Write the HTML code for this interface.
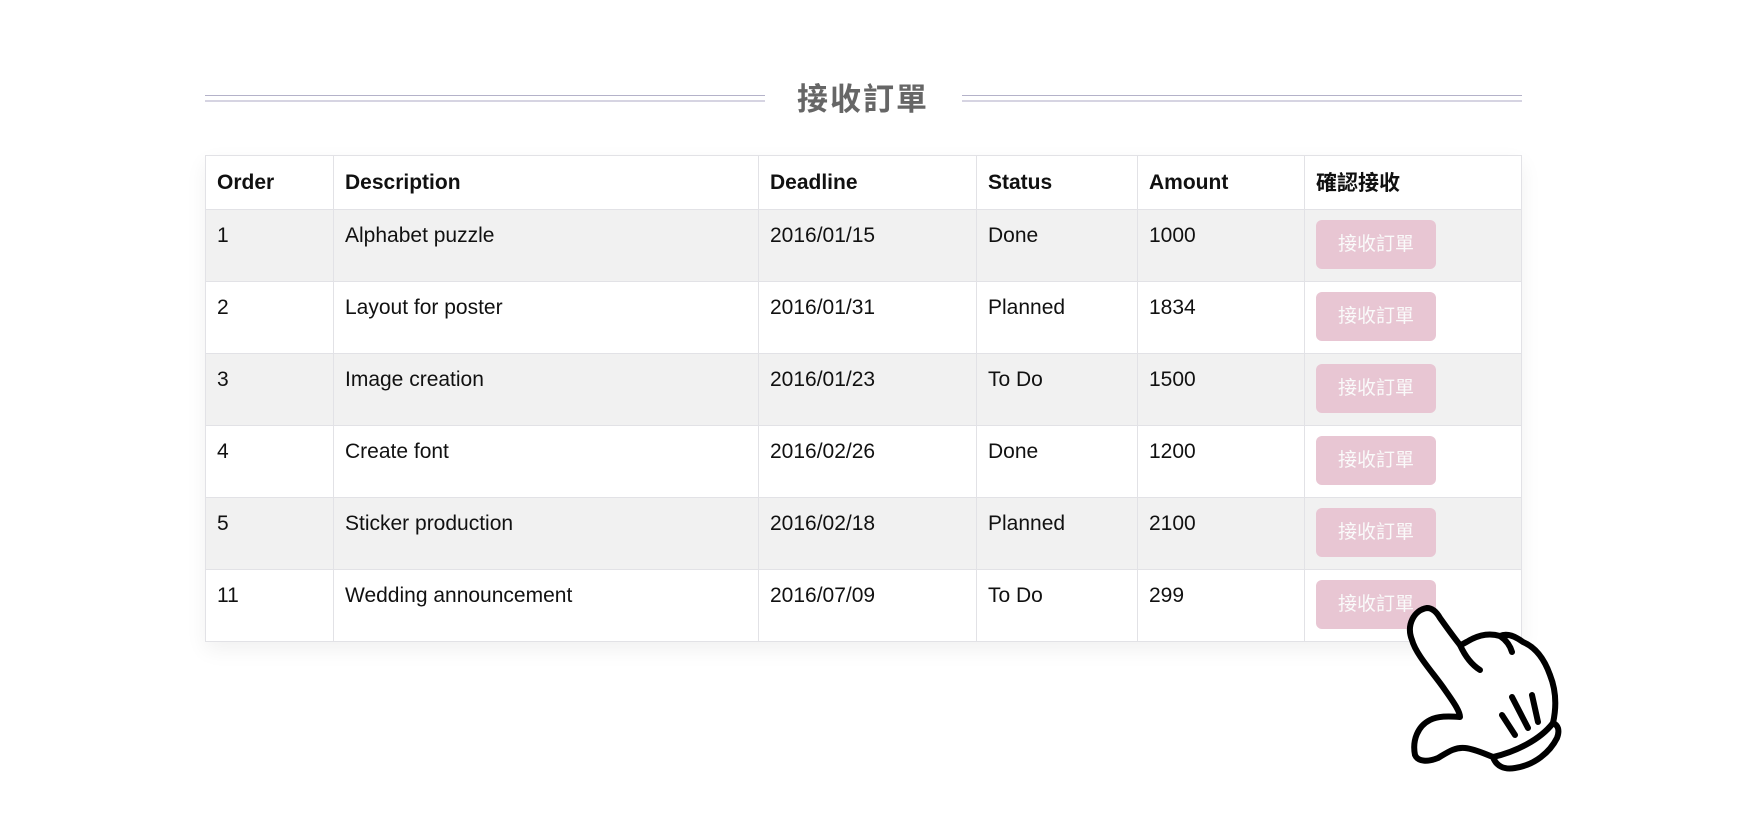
<!DOCTYPE html>
<html><head><meta charset="utf-8"><style>
body{margin:0;width:1748px;height:837px;background:#fff;position:relative;font-family:"Liberation Sans","Noto Sans CJK TC",sans-serif;overflow:hidden}
.l{position:absolute;height:6px;border-top:1px solid #b4b2c9;}
.l:after{content:"";position:absolute;left:0;right:0;top:4px;height:2px;background:#d6d4e2}
.title{position:absolute;left:763px;width:200px;top:74px;text-align:center;font-size:31px;font-weight:bold;color:#666;letter-spacing:2px}
table{position:absolute;left:205px;top:155px;width:1317px;border-collapse:collapse;box-shadow:0 8px 20px rgba(0,0,0,.06);font-size:21px;color:#111}
td,th{border:1px solid #e2e2e6;text-align:left;vertical-align:top;padding:14px 11px 0;box-sizing:border-box}
tr{height:72px}
tr:first-child{height:54px}
th{padding-top:15px;font-weight:bold}
tr:nth-child(even) td{background:#f1f1f1}
.b{display:inline-block;width:120px;height:49px;line-height:49px;background:#e8c6d3;color:#fafafa;border-radius:6px;text-align:center;font-size:19px;margin-top:-2px}
</style></head><body>
<div class="l" style="left:205px;width:560px;top:95px"></div>
<div class="l" style="left:962px;width:560px;top:95px"></div>
<div class="title">接收訂單</div>
<table>
<tr><th style="width:128px">Order</th><th style="width:425px">Description</th><th style="width:218px">Deadline</th><th style="width:161px">Status</th><th style="width:167px">Amount</th><th style="padding-top:11px">確認接收</th></tr>
<tr><td>1</td><td>Alphabet puzzle</td><td>2016/01/15</td><td>Done</td><td>1000</td><td style="padding-top:12px"><span class="b">接收訂單</span></td></tr>
<tr><td>2</td><td>Layout for poster</td><td>2016/01/31</td><td>Planned</td><td>1834</td><td style="padding-top:12px"><span class="b">接收訂單</span></td></tr>
<tr><td>3</td><td>Image creation</td><td>2016/01/23</td><td>To Do</td><td>1500</td><td style="padding-top:12px"><span class="b">接收訂單</span></td></tr>
<tr><td>4</td><td>Create font</td><td>2016/02/26</td><td>Done</td><td>1200</td><td style="padding-top:12px"><span class="b">接收訂單</span></td></tr>
<tr><td>5</td><td>Sticker production</td><td>2016/02/18</td><td>Planned</td><td>2100</td><td style="padding-top:12px"><span class="b">接收訂單</span></td></tr>
<tr><td>11</td><td>Wedding announcement</td><td>2016/07/09</td><td>To Do</td><td>299</td><td style="padding-top:12px"><span class="b">接收訂單</span></td></tr>
</table>
<svg style="position:absolute;left:1400px;top:600px" width="170" height="180" viewBox="0 0 170 180">
<g fill="#fff" stroke="#000" stroke-width="6" stroke-linecap="round" stroke-linejoin="round">
<path d="M27 8 C14 10 6 25 12 40 C16 55 35 75 45 90 C55 104 60 112 60 117 C48 116 38 116 30 120 C18 126 12 140 15 155 C18 162 28 162 38 158 C48 152 55 147 65 148 C75 149 85 154 93 157 C96 166 104 170 115 168 C135 165 150 152 157 138 C160 130 158 125 153 123 C157 105 156 90 150 75 C144 58 135 47 123 42 C115 36 107 33 100 36 C90 33 80 35 72 39 C66 42 62 45 60 45 C52 35 45 25 40 18 C36 11 32 8 27 8 Z"/>
<path d="M60 45 C65 56 72 65 80 70" fill="none"/>
<path d="M100 36 C106 40 110 45 112 52" fill="none"/>
<path d="M93 157 C115 152 140 140 153 123" fill="none"/>
<path d="M102 115 L115 135 M112 97 L128 128 M132 95 L138 122" fill="none"/>
</g></svg>
</body></html>
